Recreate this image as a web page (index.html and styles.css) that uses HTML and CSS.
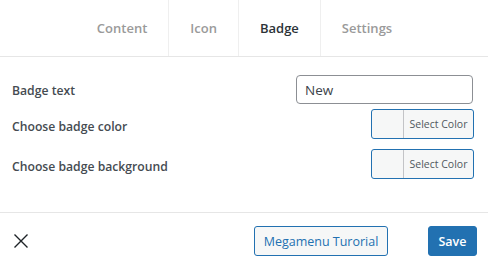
FILE: index.html
```html
<!DOCTYPE html>
<html lang="en">
<head>
    <meta charset="UTF-8">
    <title>Menu Item Settings</title>
    <link rel="stylesheet" href="styles.css">
</head>
<body>
    <div class="modal">
        <nav class="tabs">
            <a class="tab">Content</a>
            <a class="tab">Icon</a>
            <a class="tab active">Badge</a>
            <a class="tab">Settings</a>
        </nav>

        <div class="panel">
            <div class="row row-text">
                <label>Badge text</label>
                <input type="text" class="text-input" value="New">
            </div>
            <div class="row">
                <label>Choose badge color</label>
                <button class="color-btn"><span class="swatch"></span><span class="color-label">Select Color</span></button>
            </div>
            <div class="row">
                <label>Choose badge background</label>
                <button class="color-btn"><span class="swatch"></span><span class="color-label">Select Color</span></button>
            </div>
        </div>

        <footer class="footer">
            <button class="close" aria-label="Close">
                <svg width="16" height="16" viewBox="0 0 16 16"><path d="M1.5 1.5 L14.5 14.5 M14.5 1.5 L1.5 14.5" stroke="#1d2327" stroke-width="1.4" fill="none"/></svg>
            </button>
            <div class="actions">
                <button class="btn btn-outline">Megamenu Turorial</button>
                <button class="btn btn-primary">Save</button>
            </div>
        </footer>
    </div>
</body>
</html>
```

FILE: styles.css
```css
body { margin: 0; background: #fff; font-family: "Open Sans", "Noto Sans", sans-serif; color: #3c434a; }
.modal { width: 488px; height: 265px; display: flex; flex-direction: column; }

.tabs { display: flex; justify-content: center; height: 56px; border-bottom: 1px solid #e6e6e6; padding-left: 1px; }
.tab { display: flex; align-items: center; padding: 0 21px; font-size: 13px; font-weight: 600; color: #9a9a9a; border-right: 1px solid #efefef; }
.tab:last-child { border-right: none; }
.tab.active { color: #2c3338; }

.panel { padding: 18px 14px 0 12px; height: 137px; border-bottom: 1px solid #e6e6e6; }
.row { display: flex; justify-content: space-between; align-items: center; height: 30px; margin-bottom: 10px; }
.row-text { height: 29px; margin-bottom: 5px; }
.row label { font-size: 12.2px; font-weight: 600; color: #454b51; padding-top: 4px; }
.row-text label { padding-top: 2px; }
.text-input { width: 177px; height: 29px; box-sizing: border-box; border: 1px solid #8c8f94; border-radius: 4px; padding: 0 8px; font-family: inherit; font-size: 13.5px; color: #3c434a; margin-right: 1px; }

.color-btn { display: flex; width: 103px; height: 30px; padding: 0; border: 1px solid #2271b1; border-radius: 3px; background: #f6f7f7; font-family: inherit; overflow: hidden; }
.swatch { width: 31px; height: 100%; border-right: 1px solid #c3c4c7; }
.color-label { flex: 1; display: flex; align-items: center; justify-content: center; font-size: 10.5px; color: #50575e; }

.footer { flex: 1; display: flex; justify-content: space-between; align-items: center; padding: 4px 11px 0 13px; }
.close { background: none; border: none; padding: 0; width: 16px; height: 16px; display: flex; }
.actions { display: flex; gap: 40px; }
.btn { height: 30px; padding: 0; border-radius: 3px; font-family: inherit; font-size: 12.5px; white-space: nowrap; }
.btn-outline { width: 134px; background: #f6f7f7; border: 1px solid #2271b1; color: #2271b1; }
.btn-primary { width: 49px; background: #2271b1; border: 1px solid #2271b1; color: #fff; font-weight: 600; }
```
